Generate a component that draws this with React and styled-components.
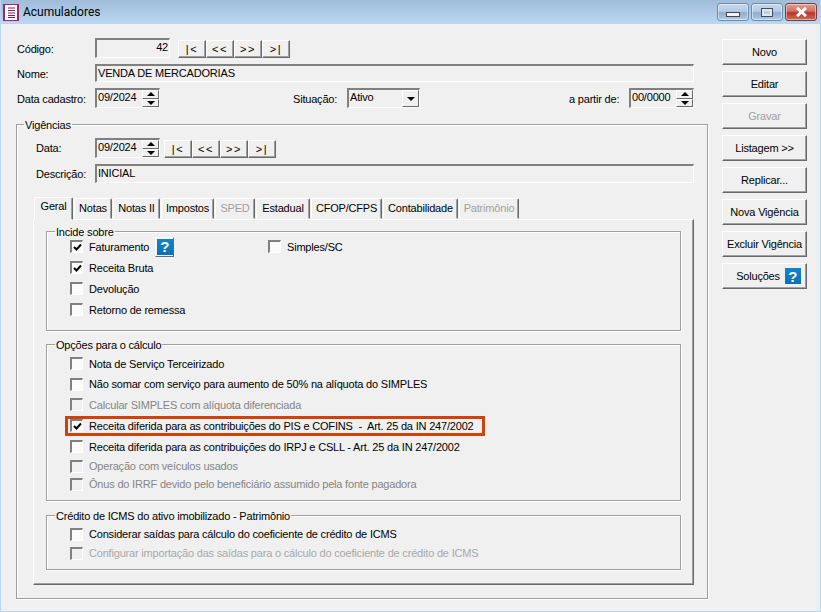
import React from 'react';
import styled, { createGlobalStyle } from 'styled-components';

const GlobalStyle = createGlobalStyle`
  html, body {
    margin: 0;
    padding: 0;
    background: #f0f0f0;
  }
  * {
    box-sizing: border-box;
  }
`;

const Win = styled.div`
  display: flex;
  flex-direction: column;
  width: 821px;
  height: 612px;
  overflow: hidden;
  color: #000;
  font: 11px 'Liberation Sans', Arial, sans-serif;
  letter-spacing: -0.19px;
  background: #f0f0f0;
  border: 1px solid #b9d6f3;
  border-top: 0;
`;

const TitleBar = styled.div`
  display: flex;
  align-items: center;
  flex: none;
  height: 24px;
  margin: 0 -1px;
  padding: 0 3px;
  background: linear-gradient(#9fbcd9, #bcd7f2);
`;

const TitleIcon = styled.svg`
  width: 16px;
  height: 17px;
  margin-right: 4px;
`;

const TitleText = styled.span`
  font: 12px 'Roboto', sans-serif;
  letter-spacing: 0;
`;

const WinButtons = styled.div`
  display: flex;
  margin-left: auto;
  padding-right: 1px;
`;

const WinButton = styled.div`
  display: flex;
  align-items: center;
  justify-content: center;
  width: 32px;
  height: 18px;
  margin-left: 2px;
  border: 1px solid ${(p) => (p.$close ? '#7a3b3b' : '#6f8aa8')};
  border-radius: 3px;
  background: ${(p) =>
    p.$close
      ? 'linear-gradient(#e0a090 0%, #d07060 45%, #b83525 55%, #c87060 100%)'
      : 'linear-gradient(#c5d8ea 0%, #b4cbe2 45%, #8fadcb 55%, #b0cde8 100%)'};
  box-shadow: inset 0 0 0 1px rgba(255, 255, 255, 0.45);
`;

const MinGlyph = styled.div`
  width: 14px;
  height: 5px;
  margin-top: 5px;
  background: #f4f4f4;
  border: 1px solid #445;
`;

const MaxGlyph = styled.div`
  width: 12px;
  height: 9px;
  background: #b9cfe4;
  border: 1px solid #3f4d5c;
  box-shadow: inset 0 0 0 2px #dde7f0;
`;

const Client = styled.div`
  display: flex;
  flex: 1;
  padding: 14px 0 0 15px;
`;

const Main = styled.div`
  display: flex;
  flex-direction: column;
  width: 692px;
`;

const TopForm = styled.div`
  display: flex;
  flex-direction: column;
  padding-right: 14px;
`;

const Side = styled.div`
  display: flex;
  flex-direction: column;
  gap: 6px;
  width: 85px;
  margin: 1px 0 0 14px;
`;

const Row = styled.div`
  display: flex;
  align-items: center;
  height: ${(p) => p.$h || 20}px;
  margin-top: ${(p) => p.$mt || 0}px;
`;

const Label = styled.span`
  flex: none;
  width: ${(p) => p.$w || 79}px;
  margin-left: ${(p) => p.$ml || 0}px;
  padding-top: ${(p) => (p.$low ? 2 : 0)}px;
  padding-left: 1px;
  white-space: nowrap;
`;

const Field = styled.div`
  flex: ${(p) => (p.$grow ? 1 : 'none')};
  display: flex;
  align-items: flex-start;
  justify-content: ${(p) => (p.$right ? 'flex-end' : 'flex-start')};
  width: ${(p) => (p.$w ? `${p.$w}px` : 'auto')};
  height: ${(p) => p.$h || 20}px;
  padding: 0 ${(p) => (p.$flush ? 0 : p.$right ? 1 : 2)}px 0 1px;
  line-height: 14px;
  white-space: nowrap;
  background: #f0f0f0;
  border: 2px solid;
  border-color: #808080 #fff #fff #808080;
  border-right-width: 1px;
  border-bottom-width: 1px;
`;

const FieldValue = styled.span`
  flex: 1;
`;

const SpinBox = styled.div`
  display: flex;
  flex-direction: column;
  flex: none;
  width: 17px;
  height: 17px;
  margin-left: auto;
`;

const SpinPart = styled.div`
  display: flex;
  align-items: center;
  justify-content: center;
  flex: 1;
  background: #f0f0f0;
  border: 1px solid;
  border-color: #fff #696969 #696969 #fff;
  &::after {
    content: '';
    border: 4px solid transparent;
    border-top-width: ${(p) => (p.$down ? '4px' : 0)};
    border-bottom-width: ${(p) => (p.$down ? 0 : '4px')};
    border-top-color: ${(p) => (p.$down ? '#000' : 'transparent')};
    border-bottom-color: ${(p) => (p.$down ? 'transparent' : '#000')};
  }
`;

const ComboArrow = styled.div`
  display: flex;
  align-items: center;
  justify-content: center;
  width: 17px;
  height: 17px;
  margin-left: auto;
  background: #f0f0f0;
  border: 1px solid;
  border-color: #fff #696969 #696969 #fff;
  &::after {
    content: '';
    border: 4px solid transparent;
    border-top-color: #000;
    border-bottom-width: 0;
  }
`;

const NavGroup = styled.div`
  display: flex;
  align-self: flex-end;
  margin-left: ${(p) => p.$ml || 8}px;
`;

const NavButton = styled.div`
  display: flex;
  align-items: center;
  justify-content: center;
  width: 28px;
  height: 18px;
  font-size: 11px;
  letter-spacing: 1.5px;
  background: #f0f0f0;
  border: 1px solid;
  border-color: #fff #696969 #696969 #fff;
  box-shadow: inset -1px -1px 0 #a0a0a0;
`;

const SideButton = styled.div`
  display: flex;
  align-items: center;
  justify-content: center;
  gap: 5px;
  height: 26px;
  padding-left: ${(p) => p.$pl || 0}px;
  color: ${(p) => (p.$disabled ? '#a0a0a0' : '#000')};
  white-space: nowrap;
  background: #f0f0f0;
  border: 1px solid;
  border-color: #fff #696969 #696969 #fff;
  box-shadow: inset -1px -1px 0 #a0a0a0;
`;

const HelpIcon = styled.div`
  display: flex;
  align-items: center;
  justify-content: center;
  width: 16px;
  height: 16px;
  color: #fff;
  font: bold 15px 'Liberation Sans', sans-serif;
  background: linear-gradient(#0f86cc, #0a70b4);
`;

const HelpButton = styled.div`
  display: flex;
  align-items: center;
  justify-content: center;
  width: 19px;
  height: 20px;
  margin-left: 6px;
  background: #f0f0f0;
  border: 1px solid;
  border-color: #fff #696969 #696969 #fff;
`;

const Group = styled.fieldset`
  height: ${(p) => p.$h}px;
  margin: ${(p) => p.$mt || 0}px 0 0;
  padding: 0;
  min-width: 0;
  border: 1px solid #a0a0a0;
  border-radius: 0;
  box-shadow: 1px 1px 0 #fff, inset 1px 1px 0 #fff;
`;

const Legend = styled.legend`
  margin-left: ${(p) => p.$ml || 8}px;
  padding: 2px 1px 0;
  line-height: 13px;
`;

const GroupBody = styled.div`
  margin-top: ${(p) => p.$mt || 0}px;
`;

const VigenciaBody = styled.div`
  padding: 6px 13px 0 16px;
`;

const TabStrip = styled.div`
  display: flex;
  align-items: flex-end;
  gap: 1px;
  height: 23px;
  margin: 13px 0 0 1px;
`;

const Tab = styled.div`
  position: relative;
  z-index: ${(p) => (p.$active ? 1 : 0)};
  display: flex;
  align-items: center;
  justify-content: center;
  width: ${(p) => p.$w}px;
  height: ${(p) => (p.$active ? 23 : 21)}px;
  margin-bottom: ${(p) => (p.$active ? -1 : 0)}px;
  padding-bottom: ${(p) => (p.$active ? 5 : 2)}px;
  color: ${(p) => (p.$disabled ? '#a0a0a0' : '#000')};
  background: #f0f0f0;
  border: 1px solid;
  border-color: #fff #696969 transparent #fff;
  border-radius: 2px 2px 0 0;
  box-shadow: inset -1px 0 0 #a0a0a0;
`;

const TabPanel = styled.div`
  height: 366px;
  padding: 4px 12px 0;
  background: #f0f0f0;
  border: 1px solid;
  border-color: #fff #696969 #696969 #fff;
  box-shadow: inset -1px -1px 0 #a0a0a0;
`;

const Columns = styled.div`
  display: grid;
  grid-template-columns: 221px 1fr;
`;

const CheckRow = styled.div`
  position: relative;
  display: flex;
  align-items: center;
  height: ${(p) => p.$h || 21}px;
  margin-left: ${(p) => p.$ml ?? 23}px;
  color: ${(p) => (p.$disabled === 'faint' ? '#a8a8a8' : p.$disabled ? '#858585' : '#000')};
  white-space: pre;
`;

const Box = styled.div`
  display: flex;
  align-items: center;
  justify-content: center;
  flex: none;
  width: 13px;
  height: 13px;
  margin-right: 6px;
  background: ${(p) => (p.$disabled ? '#f0f0f0' : '#fbfbfb')};
  border: 2px solid;
  border-color: #808080 #fff #fff #808080;
  border-right-width: 1px;
  border-bottom-width: 1px;
`;

const Check = styled.svg`
  flex: none;
  width: 9px;
  height: 9px;
`;

const Highlight = styled.div`
  position: absolute;
  top: 1px;
  left: -5px;
  width: 420px;
  height: 20px;
  border: 3px solid #d24108;
  pointer-events: none;
`;

const Tick = () => (
  <Check viewBox="0 0 9 9">
    <path d="M1 4 L3.5 6.5 L8 1.5" fill="none" stroke="#000" strokeWidth="2" />
  </Check>
);

const CheckItem = ({ checked, disabled, highlight, h, ml, children, extra }) => (
  <CheckRow $disabled={disabled} $h={h} $ml={ml}>
    <Box $disabled={disabled}>{checked && <Tick />}</Box>
    {children}
    {extra}
    {highlight && <Highlight />}
  </CheckRow>
);

const Spin = () => (
  <SpinBox>
    <SpinPart />
    <SpinPart $down />
  </SpinBox>
);

const Nav = ({ ml }) => (
  <NavGroup $ml={ml}>
    <NavButton>|&lt;</NavButton>
    <NavButton>&lt;&lt;</NavButton>
    <NavButton>&gt;&gt;</NavButton>
    <NavButton>&gt;|</NavButton>
  </NavGroup>
);

const tabs = [
  ['Geral', 39],
  ['Notas', 38],
  ['Notas II', 47],
  ['Impostos', 53],
  ['SPED', 40],
  ['Estadual', 54],
  ['CFOP/CFPS', 71],
  ['Contabilidade', 75],
  ['Patrimônio', 60],
];

const sideButtons = ['Novo', 'Editar', 'Gravar', 'Listagem >>', 'Replicar...', 'Nova Vigência', 'Excluir Vigência'];

export default function App() {
  return (
    <Win>
      <GlobalStyle />
      <TitleBar>
        <TitleIcon viewBox="0 0 16 17">
          <rect width="16" height="17" fill="#a3246e" />
          <rect x="2" y="1" width="12" height="15" fill="#fff" />
          <path d="M5 4h7M5 6.5h7M5 9h7M5 11.5h7M5 13.5h7" stroke="#8a1c5c" strokeWidth="1" />
        </TitleIcon>
        <TitleText>Acumuladores</TitleText>
        <WinButtons>
          <WinButton><MinGlyph /></WinButton>
          <WinButton><MaxGlyph /></WinButton>
          <WinButton $close>
            <svg width="13" height="10" viewBox="0 0 13 10">
              <path d="M2 1 L11 9 M11 1 L2 9" stroke="#fff" strokeWidth="3" />
            </svg>
          </WinButton>
        </WinButtons>
      </TitleBar>
      <Client>
        <Main>
          <TopForm>
            <Row>
              <Label $low>Código:</Label>
              <Field $w={75} $right>42</Field>
              <Nav />
            </Row>
            <Row $mt={6} $h={18}>
              <Label $low>Nome:</Label>
              <Field $grow $h={18}>VENDA DE MERCADORIAS</Field>
            </Row>
            <Row $mt={6}>
              <Label $low>Data cadastro:</Label>
              <Field $w={65} $flush><FieldValue>09/2024</FieldValue><Spin /></Field>
              <Label $low $ml={132} $w={55}>Situação:</Label>
              <Field $w={73} $flush><FieldValue>Ativo</FieldValue><ComboArrow /></Field>
              <Label $low $ml={148} $w={61}>a partir de:</Label>
              <Field $w={65} $flush><FieldValue>00/0000</FieldValue><Spin /></Field>
            </Row>
          </TopForm>
          <Group $mt={9} $h={482}>
            <Legend $ml={7}>Vigências</Legend>
            <VigenciaBody>
              <Row>
                <Label $w={60} $ml={2}>Data:</Label>
                <Field $w={65} $flush><FieldValue>09/2024</FieldValue><Spin /></Field>
                <Nav ml={4} />
              </Row>
              <Row $mt={6} $h={19}>
                <Label $w={60} $ml={2}>Descrição:</Label>
                <Field $grow $h={19}>INICIAL</Field>
              </Row>
              <TabStrip>
                {tabs.map(([name, w], i) => (
                  <Tab key={name} $w={w} $active={i === 0} $disabled={name === 'SPED' || name === 'Patrimônio'}>
                    {name}
                  </Tab>
                ))}
              </TabStrip>
              <TabPanel>
                <Group $h={107}>
                  <Legend>Incide sobre</Legend>
                  <GroupBody $mt={-3}>
                    <Columns>
                      <div>
                        <CheckItem checked extra={<HelpButton><HelpIcon>?</HelpIcon></HelpButton>}>Faturamento</CheckItem>
                        <CheckItem checked>Receita Bruta</CheckItem>
                        <CheckItem>Devolução</CheckItem>
                        <CheckItem>Retorno de remessa</CheckItem>
                      </div>
                      <div>
                        <CheckItem ml={0}>Simples/SC</CheckItem>
                      </div>
                    </Columns>
                  </GroupBody>
                </Group>
                <Group $mt={6} $h={164}>
                  <Legend>Opções para o cálculo</Legend>
                  <GroupBody $mt={1}>
                    <CheckItem>Nota de Serviço Terceirizado</CheckItem>
                    <CheckItem h={20}>Não somar com serviço para aumento de 50% na alíquota do SIMPLES</CheckItem>
                    <CheckItem disabled>Calcular SIMPLES com alíquota diferenciada</CheckItem>
                    <CheckItem checked highlight>Receita diferida para as contribuições do PIS e COFINS  -  Art. 25 da IN 247/2002</CheckItem>
                    <CheckItem>Receita diferida para as contribuições do IRPJ e CSLL - Art. 25 da IN 247/2002</CheckItem>
                    <CheckItem disabled h={18}>Operação com veículos usados</CheckItem>
                    <CheckItem disabled h={18}>Ônus do IRRF devido pelo beneficiário assumido pela fonte pagadora</CheckItem>
                  </GroupBody>
                </Group>
                <Group $mt={7} $h={62}>
                  <Legend>Crédito de ICMS do ativo imobilizado - Patrimônio</Legend>
                  <GroupBody $mt={1}>
                    <CheckItem h={20}>Considerar saídas para cálculo do coeficiente de crédito de ICMS</CheckItem>
                    <CheckItem disabled="faint" h={18}>Configurar importação das saídas para o cálculo do coeficiente de crédito de ICMS</CheckItem>
                  </GroupBody>
                </Group>
              </TabPanel>
            </VigenciaBody>
          </Group>
        </Main>
        <Side>
          {sideButtons.map((b) => (
            <SideButton key={b} $disabled={b === 'Gravar'}>{b}</SideButton>
          ))}
          <SideButton $pl={8}>Soluções<HelpIcon>?</HelpIcon></SideButton>
        </Side>
      </Client>
    </Win>
  );
}
